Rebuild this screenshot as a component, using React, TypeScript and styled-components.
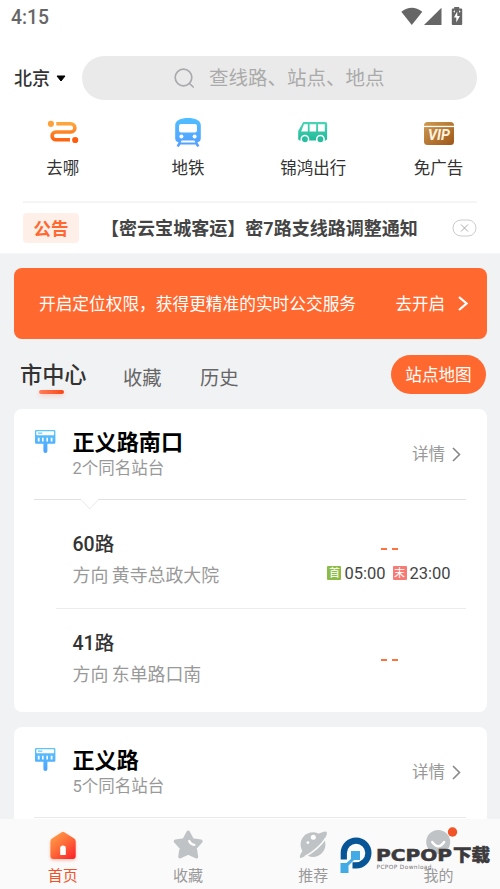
import React from "react";
import styled, { createGlobalStyle } from "styled-components";

const GlobalStyle = createGlobalStyle`
  * { box-sizing: border-box; }
  body {
    margin: 0;
    background: #f1f2f4;
    font-family: Roboto, "Noto Sans CJK SC", sans-serif;
    color: #333;
  }
`;

const Screen = styled.div`
  position: relative;
  width: 500px;
  height: 889px;
  overflow: hidden;
  display: flex;
  flex-direction: column;
  background: #f1f2f4;
`;

const Text = styled.span<{ $size: number; $color?: string; $weight?: number; $line?: number; $drop?: number }>`
  font-size: ${(p) => p.$size}px;
  line-height: ${(p) => p.$line ?? 24}px;
  font-weight: ${(p) => p.$weight ?? 400};
  color: ${(p) => p.$color ?? "#333"};
  padding-top: ${(p) => p.$drop ?? 0}px;
  white-space: nowrap;
`;

const TopPanel = styled.header`
  height: 254px;
  flex: none;
  display: flex;
  flex-direction: column;
  background: #fff;
  border-bottom: 1px solid #f6f6f7;
`;

const StatusBar = styled.div`
  height: 56px;
  padding: 6px 37px 0 11px;
  display: flex;
  justify-content: space-between;
  align-items: flex-start;
`;

const SearchRow = styled.div`
  height: 44px;
  padding: 0 23px 0 14px;
  display: flex;
  align-items: center;
`;

const City = styled.div`
  width: 68px;
  display: flex;
  align-items: center;
  gap: 6px;
`;

const SearchBox = styled.div`
  flex: 1;
  height: 44px;
  border-radius: 22px;
  background: #eaeaea;
  display: flex;
  align-items: center;
  padding-left: 91px;
  gap: 13px;
`;

const Shortcuts = styled.nav`
  height: 101px;
  display: grid;
  grid-template-columns: repeat(4, 125.3px);
  justify-content: start;
  padding-top: 16px;
`;

const Shortcut = styled.div`
  display: flex;
  flex-direction: column;
  align-items: center;
  gap: 9px;
`;

const NoticeBar = styled.div`
  margin: 0 23px;
  height: 52px;
  border-top: 2px solid #f5f5f5;
  display: flex;
  align-items: center;
`;

const NoticeTag = styled.div`
  width: 56px;
  height: 30px;
  margin-right: 22px;
  border-radius: 4px;
  background: #ffefe9;
  display: flex;
  align-items: center;
  justify-content: center;
`;

const Dismiss = styled.svg`
  margin-left: auto;
`;

const Banner = styled.section`
  flex: none;
  margin: 14px 13px 0 14px;
  height: 71px;
  border-radius: 8px;
  background: #ff682e;
  display: flex;
  align-items: center;
  padding: 0 19px 0 25px;
`;

const BannerAction = styled.div`
  margin-left: auto;
  display: flex;
  align-items: center;
  gap: 13px;
`;

const Tabs = styled.nav`
  flex: none;
  height: 70px;
  padding: 16px 14px 0 20px;
  display: flex;
  align-items: flex-start;
`;

const Tab = styled.div<{ $width: number; $top: number }>`
  width: ${(p) => p.$width}px;
  padding-top: ${(p) => p.$top}px;
  display: flex;
  flex-direction: column;
`;

const Indicator = styled.i`
  width: 25px;
  height: 4px;
  margin: -1px 0 0 19px;
  border-radius: 2px;
  background: linear-gradient(90deg, #ff7d5c, #fa4716);
  box-shadow: 0 2px 4px rgba(255, 90, 40, 0.22);
`;

const MapButton = styled.button`
  width: 95px;
  height: 39px;
  margin-left: auto;
  padding: 0;
  border: 0;
  border-radius: 20px;
  background: #ff682e;
  font-family: inherit;
  display: flex;
  align-items: center;
  justify-content: center;
`;

const Card = styled.section`
  flex: none;
  height: 303px;
  margin: 0 13px 15px 14px;
  padding: 0 21px 0 20px;
  border-radius: 8px;
  background: #fff;
`;

const StationHead = styled.div`
  height: 90px;
  display: flex;
  padding-top: 20px;
`;

const StationName = styled.div`
  margin-left: 16.5px;
  display: flex;
  flex-direction: column;
`;

const Details = styled.div`
  margin: 13px 5px 0 auto;
  display: flex;
  align-items: center;
  height: 24px;
  gap: 7px;
`;

const Rule = styled.svg`
  display: block;
`;

const Route = styled.div<{ $last?: boolean }>`
  height: ${(p) => (p.$last ? 102 : 99)}px;
  margin-left: 22px;
  padding: 23px 15px 0 16.5px;
  border-bottom: ${(p) => (p.$last ? 0 : 1)}px solid #ececec;
  display: flex;
  justify-content: space-between;
`;

const RouteInfo = styled.div`
  display: flex;
  flex-direction: column;
  gap: 7px;
`;

const Destination = styled(Text)`
  word-spacing: -1px;
`;

const Arrival = styled.div`
  width: 124px;
  display: flex;
  flex-direction: column;
  align-items: center;
`;

const Dashes = styled.div<{ $top: number }>`
  display: flex;
  gap: 5px;
  margin-top: ${(p) => p.$top}px;
  i {
    width: 6px;
    height: 2px;
    background: #ff713d;
  }
`;

const Hours = styled.div`
  margin-top: 14px;
  display: flex;
  align-items: center;
`;

const HourTag = styled.span<{ $color: string }>`
  width: 14px;
  height: 14px;
  margin: 0 3px 2px 0;
  padding-top: 1px;
  border-radius: 1px;
  background: ${(p) => p.$color};
  color: #fff;
  font-size: 11px;
  line-height: 14px;
  text-align: center;
`;

const HourText = styled(Text)`
  margin-right: 7px;
  &:last-child { margin-right: 0; }
`;

const BottomNav = styled.nav`
  position: absolute;
  left: 0;
  right: 0;
  bottom: 0;
  height: 70px;
  background: #fafafa;
  display: grid;
  grid-template-columns: repeat(4, 125.3px);
  justify-content: start;
`;

const NavItem = styled.div`
  display: flex;
  flex-direction: column;
  align-items: center;
  padding-top: 6px;
`;

const Watermark = styled.svg`
  position: absolute;
  left: 336px;
  top: 832px;
`;

const Chevron = ({ color, w = 9, h = 14, stroke = 1.6 }: { color: string; w?: number; h?: number; stroke?: number }) => (
  <svg width={w} height={h} viewBox={`0 0 ${w} ${h}`} fill="none" stroke={color} strokeWidth={stroke}>
    <path d={`M1 1 L${w - 1.5} ${h / 2} L1 ${h - 1}`} />
  </svg>
);

const StatusIcons = () => (
  <svg width="62" height="20" viewBox="401 6 62 20" fill="#666">
    <path d="M401.3 11.8 Q411.8 3.5 422.3 11.8 L411.8 25Z" />
    <path d="M424 25 L441.5 7.8 V25Z" />
    <path d="M454.2 7h5v1.6h2q1 0 1 1V24q0 1-1 1h-8.4q-1 0-1-1V9.6q0-1 1-1h1.4Z" />
    <path d="M457.2 11.5 L453.9 17.6 H456.3 V22.6 L459.9 15.9 H457.3Z" fill="#fff" />
    <path d="M453.3 11.5l1.6-1.3v2.6M460.7 11.5l-1.6-1.3v2.6" fill="#fff" />
  </svg>
);

const RouteIcon = () => (
  <svg width="34" height="32" viewBox="0 0 34 32">
    <defs>
      <linearGradient id="way" x1="0" y1="0" x2="0" y2="1">
        <stop offset="0" stopColor="#ffa63b" />
        <stop offset="1" stopColor="#ff6412" />
      </linearGradient>
    </defs>
    <circle cx="4.9" cy="7.8" r="3.1" fill="#ffa13a" />
    <path d="M10.3 7.8H24.8a4.1 4.1 0 0 1 0 8.2H10a3.9 3.9 0 0 0 0 7.8H24" fill="none" stroke="url(#way)" strokeWidth="3.6" />
    <circle cx="29.2" cy="24" r="3.1" fill="#ff5d0c" />
  </svg>
);

const MetroIcon = () => (
  <svg width="34" height="32" viewBox="0 0 34 32">
    <defs>
      <linearGradient id="metro" x1="0" y1="0" x2="0" y2="1">
        <stop offset="0" stopColor="#50bfff" />
        <stop offset="1" stopColor="#529eff" />
      </linearGradient>
    </defs>
    <path d="M4.2 9.5C4.2 4 10 2 17 2s12.8 2 12.8 7.5V22q0 3.8-3.4 4.2l2 3.8-2.2 1-1.6-2.6H9.4l-1.6 2.6-2.2-1 2-3.8q-3.4-.4-3.4-4.2Z" fill="url(#metro)" />
    <rect x="8" y="8" width="18" height="8.5" rx="2" fill="#fff" />
    <circle cx="10.4" cy="20.6" r="2" fill="#fff" />
    <circle cx="23.6" cy="20.6" r="2" fill="#fff" />
    <path d="M10.6 24.6h12.8l.9 1.8H9.7Z" fill="#fff" />
  </svg>
);

const BusIcon = () => (
  <svg width="34" height="32" viewBox="0 0 34 32">
    <defs>
      <linearGradient id="bus" x1="0" y1="0" x2="0" y2="1">
        <stop offset="0" stopColor="#4bd6b5" />
        <stop offset="1" stopColor="#1fb99a" />
      </linearGradient>
    </defs>
    <path d="M7.2 6H29.4q1.7 0 1.7 1.7V22.8q0 1.8-1.8 1.8H4q-1.8 0-1.8-1.8V15Z" fill="url(#bus)" />
    <path d="M8 8.2h3.8v7.2H5.1ZM13.6 8.2h6.6v7.2h-6.6ZM22 8.2h6.8v7.2H22Z" fill="#fff" />
    <g fill="#28bd9e" stroke="#fff" strokeWidth="1.5">
      <circle cx="8.9" cy="23.2" r="3.7" />
      <circle cx="24.4" cy="23.2" r="3.7" />
    </g>
  </svg>
);

const VipIcon = () => (
  <svg width="34" height="32" viewBox="0 0 34 32">
    <defs>
      <linearGradient id="vip" x1="0" y1="0" x2="1" y2="1">
        <stop offset="0" stopColor="#cf9a50" />
        <stop offset="1" stopColor="#9d5719" />
      </linearGradient>
    </defs>
    <rect x="2" y="6" width="30" height="23" rx="3.5" fill="url(#vip)" />
    <rect x="2" y="9.8" width="30" height="1.3" fill="#fff" />
    <text x="6" y="24.4" textLength="22" lengthAdjust="spacingAndGlyphs" fontFamily="Roboto" fontSize="14" fontStyle="italic" fontWeight="700" fill="#fff2df">VIP</text>
  </svg>
);

const StopIcon = () => (
  <svg width="22" height="26" viewBox="0 0 22 26">
    <defs>
      <linearGradient id="stop" x1="0" y1="0" x2="0" y2="1">
        <stop offset="0" stopColor="#5bc5fc" />
        <stop offset="1" stopColor="#4ba2ff" />
      </linearGradient>
    </defs>
    <path d="M2.2 1h18q1.2 0 1.2 1.2v11.4q0 1.2-1.2 1.2H13.4v7.2q0 2-2 2t-2-2v-7.2H2.2q-1.2 0-1.2-1.2V2.2Q1 1 2.2 1Z" fill="url(#stop)" />
    <rect x="2.3" y="2.2" width="17.8" height="4" rx=".7" fill="#fff" />
    <rect x="4" y="3.5" width="4.3" height="1.3" fill="#75c8f8" />
    <path d="M3.8 8.8h1.8v3.6H3.8ZM8 8.8h1.6v3.6H8ZM12.4 8.8H14v3.6h-1.6ZM16.7 8.8h1.8v3.6h-1.8Z" fill="#fff" />
  </svg>
);

const NavIcon = ({ kind }: { kind: string }) => (
  <svg width="42" height="38" viewBox="0 0 42 38" fill="#bfc3c5">
    {kind === "home" && (
      <>
        <defs>
          <linearGradient id="home" x1=".1" y1="0" x2=".9" y2="1">
            <stop offset="0" stopColor="#ffa34c" />
            <stop offset=".5" stopColor="#ff6a37" />
            <stop offset="1" stopColor="#fb232b" />
          </linearGradient>
          <filter id="glow" x="-30%" y="-30%" width="160%" height="160%">
            <feDropShadow dx="0" dy="1.5" stdDeviation="1.7" floodColor="#ff5b37" floodOpacity=".35" />
          </filter>
        </defs>
        <path filter="url(#glow)" d="M19.3 7.4q1.7-1.2 3.4 0l9.4 6.1q1.6 1 1.6 3V31q0 3-3 3H11.4q-3 0-3-3V16.5q0-2 1.6-3Z" fill="url(#home)" />
        <path d="M18.2 30v-6.8a2.8 2.8 0 0 1 5.6 0V30Z" fill="#fff" />
      </>
    )}
    {kind === "star" && (
      <>
        <path d="M21.2 7.3l4.1 7.7 8.6 1.3-5.9 6.4 1.4 9-8.2-3.8-8.2 3.8 1.4-9-5.9-6.4 8.6-1.3Z" stroke="#bfc3c5" strokeWidth="3.6" strokeLinejoin="round" />
        <path d="M22.2 16q1.2 3.2 5.2 3.9" fill="none" stroke="#fff" strokeWidth="2.2" strokeLinecap="round" />
      </>
    )}
    {kind === "planet" && (
      <>
        <circle cx="21" cy="19.6" r="12.4" />
        <path d="M27 8.6Q33.5 5.6 34.7 6.9Q35.8 8.5 32.2 14.5L13 31Q8.6 33.6 7.9 32.6Q7.2 30.6 10.5 26Z" />
        <path d="M33.6 13.4Q27 23.6 13.2 31.6" fill="none" stroke="#fafafa" strokeWidth="1.7" />
        <circle cx="21.3" cy="12.3" r="2.5" fill="#fff" />
        <circle cx="15.9" cy="17.6" r="1.4" fill="#fff" />
      </>
    )}
    {kind === "me" && (
      <>
        <circle cx="20.2" cy="16.9" r="12" />
        <path d="M14.2 17q6 8.4 12 0" fill="none" stroke="#fff" strokeWidth="2.4" strokeLinecap="round" />
        <circle cx="34.5" cy="7" r="4.7" fill="#f15426" />
      </>
    )}
  </svg>
);

const Station = ({ name, note, children }: { name: string; note: string; children?: React.ReactNode }) => (
  <Card>
    <StationHead>
      <StopIcon />
      <StationName>
        <Text $size={22.1} $weight={700} $color="#000" $line={27}>{name}</Text>
        <Text $size={16.5} $color="#999" $line={25}>{note}</Text>
      </StationName>
      <Details>
        <Text $size={16.5} $color="#999" $drop={2}>详情</Text>
        <Chevron color="#888" h={15} />
      </Details>
    </StationHead>
    <Rule width="432" height="11" fill="none">
      {children ? (
        <>
          <path d="M0 .5H47M64 .5H432" stroke="#e1e1e1" />
          <path d="M47 .5L55.7 10L64.5 .5" stroke="#e9e9e9" />
        </>
      ) : (
        <path d="M0 .5H432" stroke="#e9e9e9" />
      )}
    </Rule>
    {children}
  </Card>
);

const Hour = () => (
  <Hours>
    <HourTag $color="#8dbb48">首</HourTag>
    <HourText $size={16.5} $line={20} $color="#444">05:00</HourText>
    <HourTag $color="#f67b74">末</HourTag>
    <HourText $size={16.5} $line={20} $color="#444">23:00</HourText>
  </Hours>
);

const RouteRow = ({ name, to, hours, last }: { name: string; to: string; hours?: boolean; last?: boolean }) => (
  <Route $last={last}>
    <RouteInfo>
      <Text $size={19.5} $weight={500}>{name}</Text>
      <Destination $size={17.9} $color="#999">方向 {to}</Destination>
    </RouteInfo>
    <Arrival>
      <Dashes $top={hours ? 15 : 27}><i /><i /></Dashes>
      {hours && <Hour />}
    </Arrival>
  </Route>
);

const shortcuts = [
  { label: "去哪", icon: <RouteIcon /> },
  { label: "地铁", icon: <MetroIcon /> },
  { label: "锦鸿出行", icon: <BusIcon /> },
  { label: "免广告", icon: <VipIcon /> },
];

const navItems = [
  { label: "首页", kind: "home" },
  { label: "收藏", kind: "star" },
  { label: "推荐", kind: "planet" },
  { label: "我的", kind: "me" },
];

export default function App() {
  return (
    <Screen>
      <GlobalStyle />
      <TopPanel>
        <StatusBar>
          <Text $size={19.3} $weight={500} $color="#666">4:15</Text>
          <StatusIcons />
        </StatusBar>
        <SearchRow>
          <City>
            <Text $size={18} $weight={500} $drop={2}>北京</Text>
            <svg width="10" height="7" viewBox="0 0 10 7"><path d="M1 1H9L5 6Z" stroke="#000" strokeLinejoin="round" /></svg>
          </City>
          <SearchBox>
            <svg width="23" height="22" viewBox="0 0 23 22" fill="none" stroke="#aaaaae" strokeWidth="1.7">
              <circle cx="10.5" cy="10.5" r="8.3" />
              <path d="M16.5 16.5L20.2 20" strokeLinecap="round" />
            </svg>
            <Text $size={19.5} $color="#aaa" $drop={2}>查线路、站点、地点</Text>
          </SearchBox>
        </SearchRow>
        <Shortcuts>
          {shortcuts.map((s) => (
            <Shortcut key={s.label}>
              {s.icon}
              <Text $size={16.5}>{s.label}</Text>
            </Shortcut>
          ))}
        </Shortcuts>
        <NoticeBar>
          <NoticeTag><Text $size={17.5} $weight={700} $color="#ff682e" $drop={2}>公告</Text></NoticeTag>
          <Text $size={18.05} $weight={700} $color="#444" $drop={2}>【密云宝城客运】密7路支线路调整通知</Text>
          <Dismiss width="25" height="18" viewBox="0 0 25 18" fill="none" stroke="#ccc">
            <rect x="1" y="1" width="23" height="16" rx="8" />
            <path d="M9 5.5L16 12.5M16 5.5L9 12.5" stroke="#aaa" />
          </Dismiss>
        </NoticeBar>
      </TopPanel>
      <Banner>
        <Text $size={16.7} $color="#fff" $drop={2}>开启定位权限，获得更精准的实时公交服务</Text>
        <BannerAction>
          <Text $size={16.5} $color="#fff" $drop={2}>去开启</Text>
          <Chevron color="#fff" w={10} h={15} stroke={2.3} />
        </BannerAction>
      </Banner>
      <Tabs>
        <Tab $width={103} $top={4}>
          <Text $size={22.2} $weight={500} $line={32}>市中心</Text>
          <Indicator />
        </Tab>
        <Tab $width={77} $top={12}><Text $size={19.3} $color="#666">收藏</Text></Tab>
        <Tab $width={77} $top={12}><Text $size={19.3} $color="#666">历史</Text></Tab>
        <MapButton><Text $size={16.6} $color="#fff" $drop={2}>站点地图</Text></MapButton>
      </Tabs>
      <Station name="正义路南口" note="2个同名站台">
        <RouteRow name="60路" to="黄寺总政大院" hours />
        <RouteRow name="41路" to="东单路口南" last />
      </Station>
      <Station name="正义路" note="5个同名站台" />
      <BottomNav>
        {navItems.map((n) => (
          <NavItem key={n.kind}>
            <NavIcon kind={n.kind} />
            <Text $size={15} $color={n.kind === "home" ? "#f35228" : "#999"} $drop={1}>{n.label}</Text>
          </NavItem>
        ))}
      </BottomNav>
      <Watermark width="160" height="46" viewBox="336 832 160 46">
        <path d="M343.8 859.5V853a12.3 12.3 0 1 1 12.3 12.3H352.5" fill="none" stroke="#075496" strokeWidth="6.2" />
        <path d="M351 851h9v9h-6l-5.5 5.5V873h-8v-10h6l4.5-4Z" fill="#42aae5" />
        <g fill="#3c3a3d" fontFamily='"DejaVu Sans", sans-serif'>
          <text x="376" y="861" textLength="76" lengthAdjust="spacingAndGlyphs" fontSize="15.5" fontWeight="700" stroke="#3c3a3d" strokeWidth=".5">PCPOP</text>
          <text x="453" y="861" textLength="37" lengthAdjust="spacingAndGlyphs" fontFamily='"Noto Sans CJK SC", sans-serif' fontSize="16.5" fontWeight="900" stroke="#3c3a3d" strokeWidth=".5">下载</text>
          <text x="376.5" y="869" textLength="55" lengthAdjust="spacing" fontSize="5.8" fill="#777">PCPOP Download</text>
        </g>
      </Watermark>
    </Screen>
  );
}
